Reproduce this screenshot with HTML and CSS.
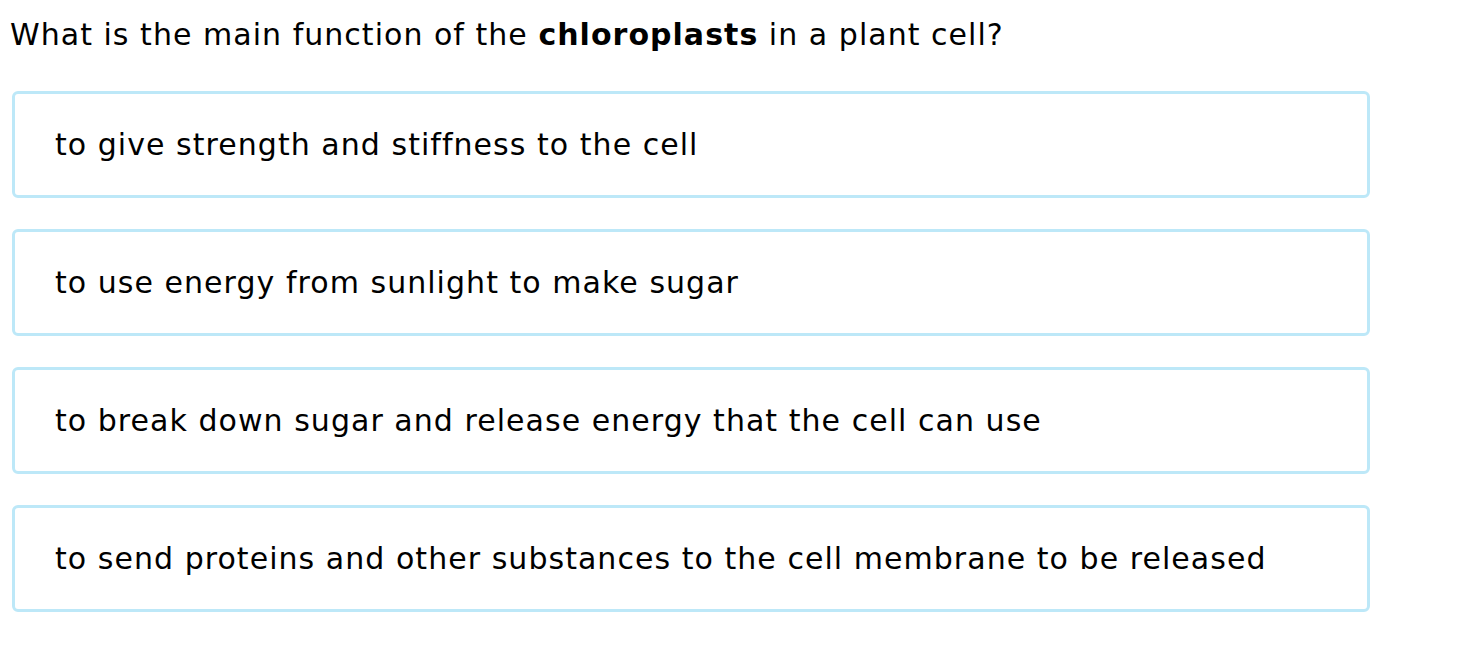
FILE: index.html
```html
<!DOCTYPE html>
<html>
<head>
<meta charset="utf-8">
<link rel="stylesheet" href="styles.css">
</head>
<body>
<div class="page">
  <p class="question">What is the main function of the <b>chloroplasts</b> in a plant cell?</p>
  <div class="options">
    <div class="option">to give strength and stiffness to the cell</div>
    <div class="option">to use energy from sunlight to make sugar</div>
    <div class="option">to break down sugar and release energy that the cell can use</div>
    <div class="option">to send proteins and other substances to the cell membrane to be released</div>
  </div>
</div>
</body>
</html>
```
FILE: styles.css
```css
html, body {
  margin: 0;
  padding: 0;
  background: #ffffff;
}
.page {
  font-family: "DejaVu Sans", Verdana, sans-serif;
  color: #000;
  padding: 17px 0 0 10px;
}
.question {
  margin: 0;
  font-size: 30px;
  line-height: 36px;
  letter-spacing: 1.03px;
}
.options {
  display: flex;
  flex-direction: column;
  gap: 31px;
  margin-top: 38px;
  width: 1358px;
  margin-left: 2px;
}
.option {
  box-sizing: border-box;
  height: 107px;
  border: 3px solid #bde8f8;
  border-radius: 6px;
  display: flex;
  align-items: center;
  padding-left: 40px;
  font-size: 30px;
  letter-spacing: 1.04px;
}
```
